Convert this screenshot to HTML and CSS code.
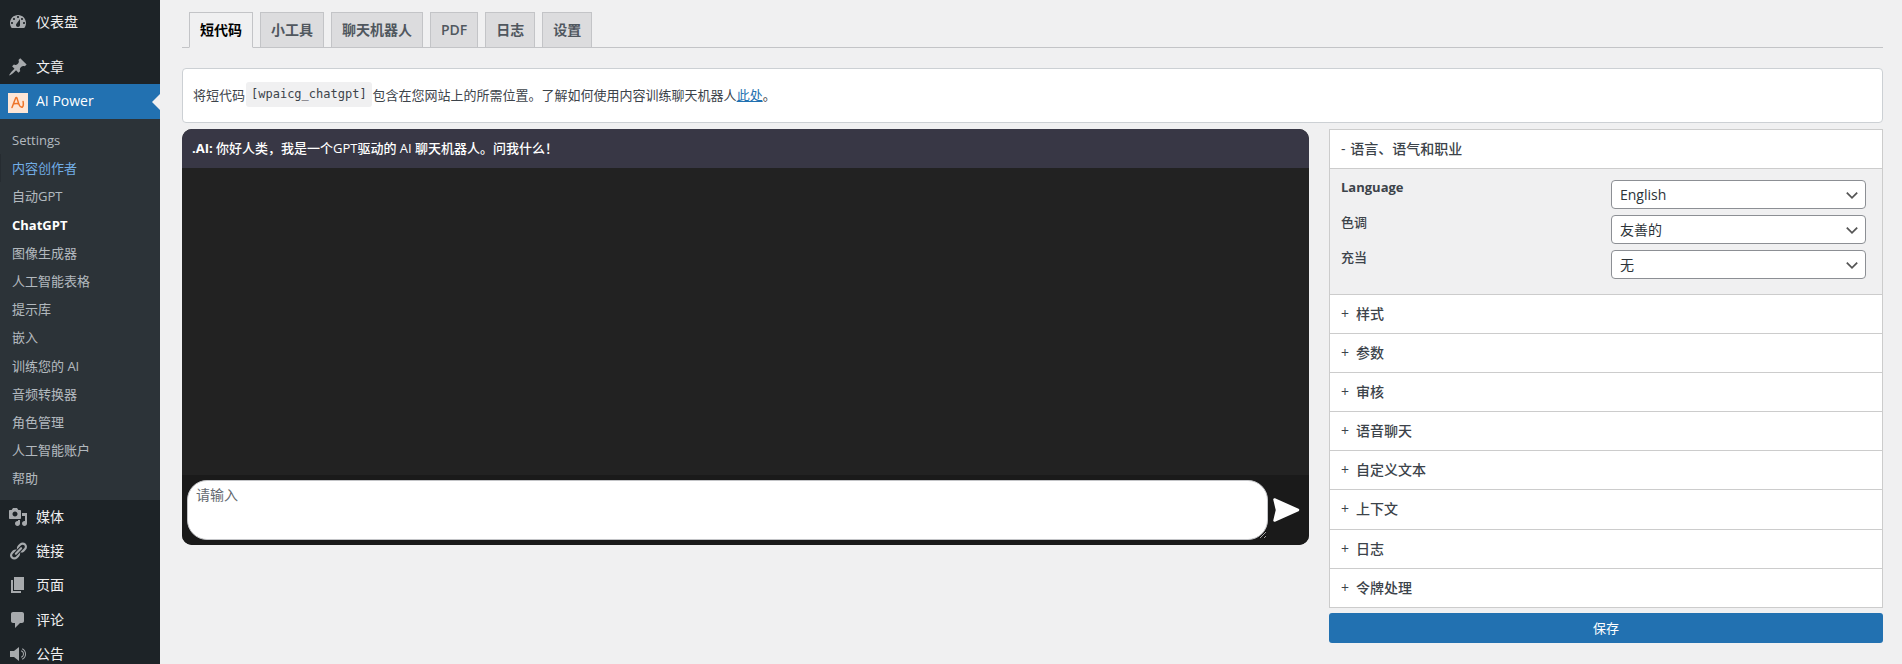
FILE: index.html
```html
<!DOCTYPE html>
<html lang="zh-CN">
<head>
  <meta charset="UTF-8">
  <title>AI Power</title>
  <link rel="stylesheet" href="styles.css">
</head>
<body>
  <div class="wrap">
    <div class="sidebar">
      <a class="menu-item first">
        <svg class="menu-icon" viewBox="0 0 20 20"><path fill-rule="evenodd" d="M3.76 16h12.48c1.1-1.37 1.76-3.11 1.76-5 0-4.42-3.58-8-8-8s-8 3.58-8 8c0 1.89.66 3.63 1.76 5zM10 4c.55 0 1 .45 1 1s-.45 1-1 1-1-.45-1-1 .45-1 1-1zM6 6c.55 0 1 .45 1 1s-.45 1-1 1-1-.45-1-1 .45-1 1-1zm8 0c.55 0 1 .45 1 1s-.45 1-1 1-1-.45-1-1 .45-1 1-1zm-5.37 5.55L12 7v6c0 1.1-.9 2-2 2s-2-.9-2-2c0-.57.24-1.08.63-1.45zM4 10c.55 0 1 .45 1 1s-.45 1-1 1-1-.45-1-1 .45-1 1-1zm12 0c.55 0 1 .45 1 1s-.45 1-1 1-1-.45-1-1 .45-1 1-1z"/></svg>
        <span>仪表盘</span>
      </a>
      <a class="menu-item">
        <svg class="menu-icon" viewBox="0 0 20 20"><path d="M10.44 3.02l1.82-1.82 6.36 6.35-1.83 1.82c-1.05-.68-2.48-.57-3.41.36l-.75.75c-.92.93-1.04 2.35-.35 3.41l-1.83 1.82-2.41-2.41-2.8 2.79c-.42.42-3.38 2.71-3.8 2.29s1.86-3.39 2.28-3.81l2.79-2.79L4.1 9.36l1.83-1.82c1.05.69 2.48.57 3.4-.36l.75-.75c.93-.92 1.05-2.35.36-3.41z"/></svg>
        <span>文章</span>
      </a>
      <a class="menu-item active">
        <svg class="plugin-icon" viewBox="0 0 20 20"><rect width="20" height="20" fill="#fde6d6"/><path d="M4 14.500C5.200 11.500 6.300 8 7.600 5.200c.4-.8 1-.8 1.400 0 .8 2.300 1.300 5 2.500 7.300.7 1.300 2.100 2.100 3.100 1.300 1-.9.9-2.700.5-5.300M6 10.800c1.500-.2 3-.3 4.200-.1" fill="none" stroke="#ee7428" stroke-width="1.500" stroke-linecap="round" stroke-linejoin="round"/></svg>
        <span>AI Power</span>
      </a>
      <ul class="submenu">
        <li>Settings</li>
        <li class="focused">内容创作者</li>
        <li>自动GPT</li>
        <li class="current">ChatGPT</li>
        <li>图像生成器</li>
        <li>人工智能表格</li>
        <li>提示库</li>
        <li>嵌入</li>
        <li>训练您的 AI</li>
        <li>音频转换器</li>
        <li>角色管理</li>
        <li>人工智能账户</li>
        <li>帮助</li>
      </ul>
      <a class="menu-item">
        <svg class="menu-icon" viewBox="0 0 20 20"><path fill-rule="evenodd" d="M13 11V4c0-.55-.45-1-1-1h-1.670L9 1H5L3.670 3H2c-.55 0-1 .45-1 1v7c0 .55.45 1 1 1h10c.55 0 1-.45 1-1zM7 4.500c1.380 0 2.500 1.120 2.500 2.500S8.380 9.500 7 9.500 4.500 8.380 4.500 7 5.620 4.500 7 4.500zM14 6h5v10.500c0 1.380-1.120 2.500-2.500 2.500S14 17.880 14 16.500s1.120-2.500 2.500-2.500c.17 0 .34.02.5.05V9h-3V6zm-4 8.050V13h2v3.500c0 1.380-1.120 2.500-2.500 2.500S7 17.880 7 16.500 8.120 14 9.500 14c.17 0 .34.02.5.05z"/></svg>
        <span>媒体</span>
      </a>
      <a class="menu-item">
        <svg class="menu-icon" viewBox="0 0 20 20"><path d="M17.740 2.760c1.680 1.690 1.680 4.410 0 6.100l-1.530 1.520c-1.120 1.120-2.700 1.470-4.140 1.090l2.620-2.610.76-.77.76-.76c.84-.84.84-2.200 0-3.040-.84-.85-2.200-.85-3.040 0l-.77.76-3.380 3.380c-.37-1.440-.02-3.020 1.100-4.140l1.520-1.530c1.690-1.680 4.420-1.680 6.100 0zM8.590 13.430l5.340-5.340c.42-.42.42-1.100 0-1.520-.44-.43-1.130-.39-1.530 0l-5.330 5.340c-.42.42-.42 1.100 0 1.520.44.43 1.130.39 1.520 0zm-.76 2.290l4.140-4.150c.38 1.440.03 3.020-1.090 4.140l-1.520 1.530c-1.690 1.680-4.410 1.680-6.100 0-1.680-1.680-1.680-4.420 0-6.100l1.530-1.520c1.120-1.120 2.700-1.470 4.140-1.100l-4.140 4.150c-.85.84-.85 2.200 0 3.050.84.84 2.200.84 3.040 0z"/></svg>
        <span>链接</span>
      </a>
      <a class="menu-item">
        <svg class="menu-icon" viewBox="0 0 20 20"><path d="M6 15V2h10v13H6zm-1 1h8v2H3V5h2v11z"/></svg>
        <span>页面</span>
      </a>
      <a class="menu-item">
        <svg class="menu-icon" viewBox="0 0 20 20"><path d="M5 2h9c1.100 0 2 .9 2 2v7c0 1.100-.9 2-2 2h-2l-5 5v-5H5c-1.100 0-2-.9-2-2V4c0-1.100.9-2 2-2z"/></svg>
        <span>评论</span>
      </a>
      <a class="menu-item">
        <svg class="menu-icon" viewBox="0 0 20 20"><path d="M2 7h4l5-4v14l-5-4H2V7zm12.690-2.460C14.820 4.590 18 5.920 18 10s-3.180 5.410-3.310 5.460c-.06.03-.13.04-.19.04-.2 0-.39-.12-.46-.31-.11-.26.02-.55.27-.65.11-.05 2.690-1.150 2.690-4.540 0-3.410-2.660-4.530-2.690-4.540-.25-.11-.38-.4-.27-.65.1-.25.39-.38.65-.27zM16 10c0 2.570-2.230 3.430-2.320 3.470-.06.02-.12.03-.18.03-.2 0-.39-.12-.47-.32-.1-.26.04-.55.29-.65.07-.02 1.680-.67 1.680-2.530s-1.610-2.510-1.680-2.530c-.25-.1-.38-.39-.29-.65.1-.25.39-.39.65-.29.09.04 2.320.9 2.320 3.470z"/></svg>
        <span>公告</span>
      </a>
    </div>

    <div class="content">
      <div class="tabs">
        <a class="tab tab-active">短代码</a>
        <a class="tab">小工具</a>
        <a class="tab">聊天机器人</a>
        <a class="tab">PDF</a>
        <a class="tab">日志</a>
        <a class="tab">设置</a>
      </div>

      <div class="notice">
        <span>将短代码</span>
        <code>[wpaicg_chatgpt]</code>
        <span>包含在您网站上的所需位置。了解如何使用内容训练聊天机器人<a href="#">此处</a>。</span>
      </div>

      <div class="columns">
        <div class="chat">
          <div class="chat-head"><strong>.AI:</strong> 你好人类，我是一个GPT驱动的 AI 聊天机器人。问我什么！</div>
          <div class="chat-body"></div>
          <div class="chat-foot">
            <textarea class="chat-input" placeholder="请输入"></textarea>
            <svg class="send" viewBox="0 0 28 26"><path d="M2.500 2.500L26 13 2.500 23.500 5 13z" fill="#fff" stroke="#fff" stroke-width="2.500" stroke-linejoin="round"/></svg>
          </div>
        </div>

        <div class="side">
          <div class="panel">
            <div class="panel-row open">- <span class="minus-label">语言、语气和职业</span></div>
            <div class="panel-body">
              <div class="field">
                <label class="lang-label">Language</label>
                <select><option>English</option></select>
              </div>
              <div class="field">
                <label>色调</label>
                <select><option>友善的</option></select>
              </div>
              <div class="field">
                <label>充当</label>
                <select><option>无</option></select>
              </div>
            </div>
            <div class="panel-row"><i>+</i>样式</div>
            <div class="panel-row"><i>+</i>参数</div>
            <div class="panel-row"><i>+</i>审核</div>
            <div class="panel-row"><i>+</i>语音聊天</div>
            <div class="panel-row"><i>+</i>自定义文本</div>
            <div class="panel-row"><i>+</i>上下文</div>
            <div class="panel-row"><i>+</i>日志</div>
            <div class="panel-row"><i>+</i>令牌处理</div>
          </div>
          <button class="save">保存</button>
        </div>
      </div>
    </div>
  </div>
</body>
</html>
```

FILE: styles.css
```css
* {
  box-sizing: border-box;
}
html, body {
  margin: 0;
  height: 100%;
}
body {
  background: #f0f0f1;
  color: #3c434a;
  font-family: "Open Sans", "Noto Sans CJK SC", sans-serif;
  font-size: 13px;
  overflow: hidden;
}
.wrap {
  display: flex;
  height: 664px;
  overflow: hidden;
}

/* admin menu */
.sidebar {
  width: 160px;
  flex: none;
  background: #1d2327;
  padding-top: 5px;
}
.menu-item {
  position: relative;
  display: flex;
  align-items: center;
  gap: 8px;
  height: 34.300px;
  padding-left: 8px;
  color: #f0f0f1;
  font-size: 14px;
}
.menu-item span {
  margin-bottom: 2px;
}
.menu-item.first {
  margin-bottom: 10.400px;
}
.menu-icon {
  width: 20px;
  height: 20px;
  flex: none;
  fill: #a7aaad;
}
.plugin-icon {
  width: 20px;
  height: 20px;
  flex: none;
  margin-top: 3px;
}
.menu-item.active {
  height: 35px;
  background: #2271b1;
  color: #fff;
}
.menu-item.active::after {
  content: "";
  position: absolute;
  right: 0;
  top: 10px;
  border: 8px solid transparent;
  border-right-color: #f0f0f1;
  border-left-width: 0;
}
.submenu {
  list-style: none;
  margin: 0;
  padding: 7px 0;
  background: #2c3338;
  color: rgba(240, 246, 252, 0.7);
}
.submenu li {
  padding: 5px 12px;
  line-height: 18.200px;
}
.submenu .focused {
  color: #72aee6;
  box-shadow: inset 1px 0 0 #262c31;
}
.submenu .current {
  color: #fff;
  font-weight: 700;
}

/* main area */
.content {
  flex: 1;
  min-width: 0;
  padding: 12px 19px 0 22px;
}
.tabs {
  display: flex;
  gap: 7px;
  height: 36px;
  padding-left: 7px;
  border-bottom: 1px solid #c3c4c7;
}
.tab {
  height: 36px;
  min-width: 46px;
  padding: 0 10px;
  background: #dcdcde;
  border: 1px solid #c3c4c7;
  color: #50575e;
  font-size: 14px;
  font-weight: 600;
  line-height: 33px;
  text-align: center;
}
.tab-active {
  background: #f0f0f1;
  border-bottom-color: #f0f0f1;
  color: #000;
}
.notice {
  display: flex;
  align-items: center;
  gap: 1px;
  height: 55px;
  margin-top: 20px;
  padding: 0 10px 2px;
  background: #fff;
  border: 1px solid #ccd0d4;
  border-radius: 4px;
}
.notice code {
  padding: 3px 5px;
  background: #f0f0f1;
  border-radius: 3px;
  color: #3c434a;
  font-family: "DejaVu Sans Mono", monospace;
  font-size: 12px;
  line-height: 19px;
}
.notice a {
  color: #2271b1;
  text-decoration: underline;
}
.columns {
  display: grid;
  grid-template-columns: 1fr 554px;
  gap: 20px;
  align-items: start;
  margin-top: 6px;
}

/* chat box */
.chat {
  display: flex;
  flex-direction: column;
  height: 416px;
  background: #222;
  border-radius: 10px;
  overflow: hidden;
}
.chat-head {
  height: 39px;
  padding: 0 10px;
  background: #383745;
  color: #fff;
  font-weight: 500;
  line-height: 39px;
}
.chat-body {
  flex: 1;
}
.chat-foot {
  display: flex;
  align-items: center;
  gap: 4px;
  height: 70px;
  padding: 0 9px 0 5px;
  background: #1a1a1a;
}
.chat-input {
  flex: 1;
  height: 60px;
  padding: 3px 8px;
  background: #fff;
  border: 1px solid #c3c4c7;
  border-radius: 20px;
  color: #2c3338;
  font-family: inherit;
  font-size: 14px;
  outline: none;
}
.chat-input::placeholder {
  color: #646970;
}
.send {
  width: 28px;
  height: 26px;
  flex: none;
}

/* settings accordion */
.panel {
  background: #fff;
  border: 1px solid #ccc;
}
.panel-row {
  height: 39.100px;
  padding-left: 11px;
  border-top: 1px solid #ccc;
  color: #3c434a;
  font-size: 14px;
  font-weight: 500;
  line-height: 38px;
}
.panel-row:first-child {
  height: 38px;
  border-top: 0;
}
.panel-row i {
  display: inline-block;
  width: 15px;
  font-style: normal;
  font-weight: 400;
}
.minus-label {
  margin-left: 1px;
}
.panel-body {
  padding: 11px 16px 15px 11px;
  background: #f0f0f1;
  border-top: 1px solid #ccc;
}
.field {
  display: flex;
  justify-content: space-between;
  margin-bottom: 6px;
}
.field:last-child {
  margin-bottom: 0;
}
.field label {
  font-weight: 500;
  line-height: 15px;
}
.field .lang-label {
  font-weight: 700;
}
.field select {
  width: 255px;
  height: 29px;
  padding: 0 24px 0 8px;
  appearance: none;
  background: #fff url("data:image/svg+xml,%3Csvg xmlns='http://www.w3.org/2000/svg' width='20' height='20'%3E%3Cpath d='M3.500 7l6.500 6.500L16.500 7' fill='none' stroke='%23555' stroke-width='2.200'/%3E%3C/svg%3E") no-repeat right 5px center / 16px 16px;
  border: 1px solid #8c8f94;
  border-radius: 4px;
  color: #2c3338;
  font-family: inherit;
  font-size: 14px;
}
.save {
  display: block;
  width: 100%;
  height: 30px;
  margin-top: 5px;
  background: #2271b1;
  border: 0;
  border-radius: 3px;
  color: #fff;
  font-family: inherit;
  font-size: 13px;
}
```
